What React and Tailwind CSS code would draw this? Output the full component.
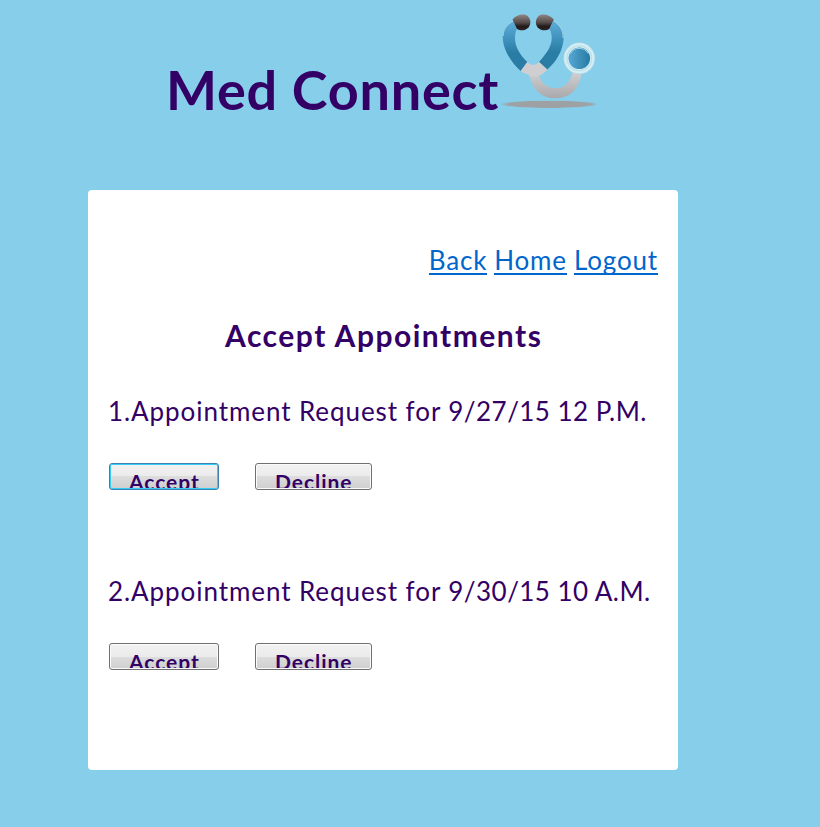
function Stethoscope() {
  return (
    <svg width="98" height="98" viewBox="0 0 98 98" className="mt-[12px] shrink-0" aria-hidden="true">
      <defs>
        <linearGradient id="tube" x1="0" y1="0" x2="0" y2="1">
          <stop offset="0" stopColor="#5eaedb" />
          <stop offset="0.65" stopColor="#297da5" />
          <stop offset="1" stopColor="#2b7ca2" />
        </linearGradient>
        <linearGradient id="tip" x1="0" y1="0" x2="0" y2="1">
          <stop offset="0" stopColor="#8f8583" />
          <stop offset="0.5" stopColor="#554c4b" />
          <stop offset="0.75" stopColor="#231b1b" />
          <stop offset="1" stopColor="#2c2424" />
        </linearGradient>
        <linearGradient id="steel" x1="0" y1="0" x2="0" y2="1">
          <stop offset="0" stopColor="#cfced0" />
          <stop offset="1" stopColor="#a9a9ac" />
        </linearGradient>
        <linearGradient id="disc" x1="0" y1="0" x2="1" y2="0">
          <stop offset="0" stopColor="#58a8d5" />
          <stop offset="1" stopColor="#257aa2" />
        </linearGradient>
        <radialGradient id="shade">
          <stop offset="0" stopColor="#9fa0a1" />
          <stop offset="0.85" stopColor="#9da2a5" />
          <stop offset="1" stopColor="#96aebb" stopOpacity="0.4" />
        </radialGradient>
      </defs>
      <ellipse cx="50" cy="92.300" rx="48" ry="3.800" fill="url(#shade)" />
      <path d="M30 62C34 78 42 86.300 56.700 86.300C71 86.300 80 77 82.700 61L73.300 61C71 70 66 76.300 56.700 76.300C47 76.300 42 70 39.300 62Z" fill="url(#steel)" />
      <path d="M14.300 8.500C7 13 3.700 17 3.700 25C4 38 12 50 21.700 59L28.300 50C20 42 16 34 16 26C16 22 16.500 20 18 17Z" fill="url(#tube)" />
      <path d="M54.500 8.500C61 13 64.700 18 64.700 26C64 39 57 50 48.300 57.500L40 50C48 41 52.700 34 52.700 26C52.700 22 52 20 50.500 17Z" fill="url(#tube)" />
      <path d="M14 9C7 13 4.200 18 4.200 24M54.800 9C61 13 64 18 64.200 26" fill="none" stroke="#b9dff0" strokeWidth="0.8" />
      <path d="M21.700 59L28.300 50Q34.300 56 40 50L48.300 57.500C45 61 42 63.500 39.300 64H30.300C29 61 25 62 21.700 59Z" fill="#cfced0" />
      <path d="M13.500 7.500C18 2 25 1.500 28.500 4C32 7 32.200 12 29.500 15.500C26 19 21 19 18 17Z" fill="url(#tip)" />
      <path d="M54.800 7.500C50 2 43 1.500 39.700 4C36.300 7 36 12 38.700 15.500C42 19 47 19 50.300 17Z" fill="url(#tip)" />
      <circle cx="80.300" cy="46.300" r="15.800" fill="#b9dfea" />
      <circle cx="80.300" cy="46.300" r="14" fill="none" stroke="#d6eef3" strokeWidth="2" />
      <circle cx="80.300" cy="46.300" r="11.700" fill="#d7eff5" />
      <circle cx="80.300" cy="46.300" r="10.800" fill="url(#disc)" />
      <path d="M71.500 41.500A10 10 0 0 1 89 41.500" fill="none" stroke="#a6d4e8" strokeWidth="1" />
    </svg>
  );
}

function Button({ children, focused = false, width }) {
  return (
    <button
      className={`h-[27px] overflow-hidden rounded-[3px] border bg-[linear-gradient(#f2f2f2,#ebebeb_50%,#dddddd_50%,#cfcfcf)] p-0 text-left text-[21px] leading-[26px] font-bold tracking-[0.95px] ${width} ${
        focused ? "border-[#3c7fb1] shadow-[inset_0_0_0_1px_#36cdf4]" : "border-[#707070] shadow-[inset_0_0_0_1px_#fbfbfb]"
      }`}
    >
      <span className="mx-px mb-px block h-[24px] overflow-hidden pt-[5px] pl-[18px]">{children}</span>
    </button>
  );
}

function Request({ number, date, focused }) {
  return (
    <section className="h-[180px]">
      <p className="h-[69px] text-[26px] leading-[34px] tracking-[0.93px] whitespace-nowrap">
        {number}.Appointment Request for <span className="tracking-[0.45px]">{date}</span>
      </p>
      <div className="ml-px flex gap-[36px]">
        <Button focused={focused} width="w-[110px]">Accept</Button>
        <Button width="w-[117px]">Decline</Button>
      </div>
    </section>
  );
}

export default function App() {
  return (
    <div className="h-[827px] overflow-hidden bg-[#87ceeb] font-['Lato','Liberation_Sans',sans-serif] text-[#330066]">
      <header className="flex h-[190px] pl-[166px]">
        <h1 className="mt-[58px] w-[333px] text-[54px] leading-[64px] font-bold tracking-[0.75px] whitespace-nowrap">Med Connect</h1>
        <Stethoscope />
      </header>
      <main className="ml-[88px] h-[580px] w-[590px] rounded-[4px] bg-white px-[20px] pt-[52px]">
        <nav className="flex h-[76px] justify-end gap-[7px] text-[26px] leading-[36px] tracking-[0.85px] text-[#0066cc]">
          <a href="#" className="h-[33px] border-b-2 border-[#0066cc]">Back</a>
          <a href="#" className="h-[33px] border-b-2 border-[#0066cc]">Home</a>
          <a href="#" className="h-[33px] border-b-2 border-[#0066cc]">Logout</a>
        </nav>
        <h2 className="-mt-[2px] h-[78px] pl-[117px] text-[30px] leading-[38px] font-bold tracking-[1.5px] whitespace-nowrap">Accept Appointments</h2>
        <Request number="1" date="9/27/15 12 P.M." focused />
        <Request number="2" date="9/30/15 10 A.M." />
      </main>
    </div>
  );
}
